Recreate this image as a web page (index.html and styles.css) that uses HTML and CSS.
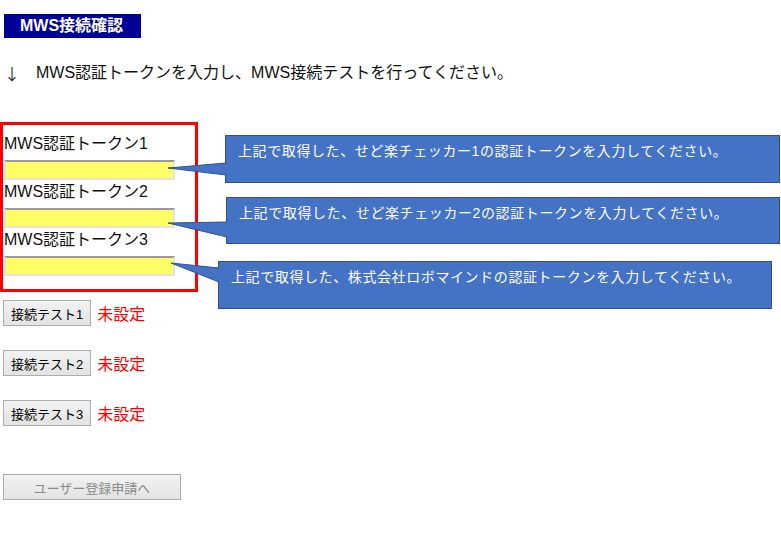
FILE: index.html
```html
<!DOCTYPE html>
<html lang="ja">
<head>
  <meta charset="UTF-8" />
  <title>MWS接続確認</title>
  <link rel="stylesheet" href="styles.css">
</head>

<body>
  <h1 class="titulo">MWS接続確認</h1>

  <p class="aviso"><span class="flecha">↓</span>MWS認証トークンを入力し、MWS接続テストを行ってください。</p>

  <div class="zona-tokens">
    <div class="caja-tokens">
      <label for="token1">MWS認証トークン1</label>
      <input type="text" id="token1">
      <label for="token2">MWS認証トークン2</label>
      <input type="text" id="token2">
      <label for="token3">MWS認証トークン3</label>
      <input type="text" id="token3">
    </div>

    <!-- globos de ayuda -->
    <div class="globo globo1">
      上記で取得した、せど楽チェッカー1の認証トークンを入力してください。
      <svg class="cola" width="62" height="48" viewBox="0 0 62 48">
        <polygon points="3,33 61,28 61,40" />
        <polyline points="61,28 3,33 61,40" />
      </svg>
    </div>
    <div class="globo globo2">
      上記で取得した、せど楽チェッカー2の認証トークンを入力してください。
      <svg class="cola" width="62" height="48" viewBox="0 0 62 48">
        <polygon points="2,26 61,25 61,40" />
        <polyline points="61,25 2,26 61,40" />
      </svg>
    </div>
    <div class="globo globo3">
      上記で取得した、株式会社ロボマインドの認証トークンを入力してください。
      <svg class="cola" width="62" height="48" viewBox="0 0 62 48">
        <polygon points="13,2 61,7 61,21" />
        <polyline points="61,7 13,2 61,21" />
      </svg>
    </div>
  </div>

  <div class="prueba">
    <button type="button">接続テスト1</button>
    <span class="estado">未設定</span>
  </div>
  <div class="prueba">
    <button type="button">接続テスト2</button>
    <span class="estado">未設定</span>
  </div>
  <div class="prueba">
    <button type="button">接続テスト3</button>
    <span class="estado">未設定</span>
  </div>

  <div class="enviar">
    <button type="button" disabled>ユーザー登録申請へ</button>
  </div>
</body>
</html>
```

FILE: styles.css
```css
body {
  margin: 0;
  color: #000;
  font-family: "Liberation Sans", "Noto Sans CJK JP", sans-serif;
  font-size: 16px;
  background-color: #fff;
}

.titulo {
  box-sizing: border-box;
  width: 137px;
  height: 24px;
  margin: 14px 0 0 4px;
  padding-left: 16px;
  background-color: #000099;
  color: white;
  font-size: 16px;
  font-weight: bold;
  line-height: 24px;
}

.aviso {
  height: 20px;
  margin: 25px 0 0 0;
  padding-left: 4px;
  line-height: 20px;
  color: #111;
}

.flecha {
  display: inline-block;
  width: 32px;
  vertical-align: top;
  font-family: "Noto Sans CJK JP", sans-serif;
  color: #333;
}

.zona-tokens {
  position: relative;
  margin-top: 39px;
}

.caja-tokens {
  box-sizing: border-box;
  width: 198px;
  border: 3px solid #ff0000;
  padding: 7px 0 13px 1px;
}

.caja-tokens label {
  display: block;
  line-height: 24px;
  padding-bottom: 4px;
  color: #111;
}

.caja-tokens input {
  display: block;
  box-sizing: border-box;
  width: 171px;
  height: 20px;
  margin: 0;
  border: 2px solid #e3e3e3;
  border-top-color: #999;
  background-color: #ffff66;
}

.globo {
  position: absolute;
  box-sizing: border-box;
  height: 48px;
  padding: 6px 12px;
  border: 1px solid #2f528f;
  background-color: #4472c4;
  color: white;
  font-size: 14px;
  letter-spacing: 0.6px;
  line-height: 18px;
  white-space: nowrap;
}

.globo1 {
  left: 225px;
  top: 13px;
  width: 555px;
}

.globo2 {
  left: 226px;
  top: 75px;
  width: 554px;
  height: 47px;
}

.globo3 {
  left: 218px;
  top: 139px;
  width: 554px;
}

.cola {
  position: absolute;
  left: -61px;
  top: -1px;
  overflow: visible;
}

.cola polygon {
  fill: #4472c4;
}

.cola polyline {
  fill: none;
  stroke: #2f528f;
  stroke-width: 1;
}

.prueba {
  display: flex;
  align-items: center;
  gap: 6px;
  margin: 8px 0 24px 3px;
}

.prueba + .prueba {
  margin-top: 0;
}

button {
  box-sizing: border-box;
  height: 26px;
  padding: 0 7px;
  border: 1px solid #adadad;
  border-radius: 0;
  background: linear-gradient(#f2f2f2, #e3e3e3);
  color: #000;
  font-family: "Liberation Sans", "Noto Sans CJK JP", sans-serif;
  font-size: 13px;
}

.estado {
  color: #ff0000;
  font-size: 16px;
}

.enviar {
  margin: 48px 0 0 3px;
}

.enviar button {
  width: 178px;
  color: #8a8a8a;
  border-color: #adadad;
}
```
